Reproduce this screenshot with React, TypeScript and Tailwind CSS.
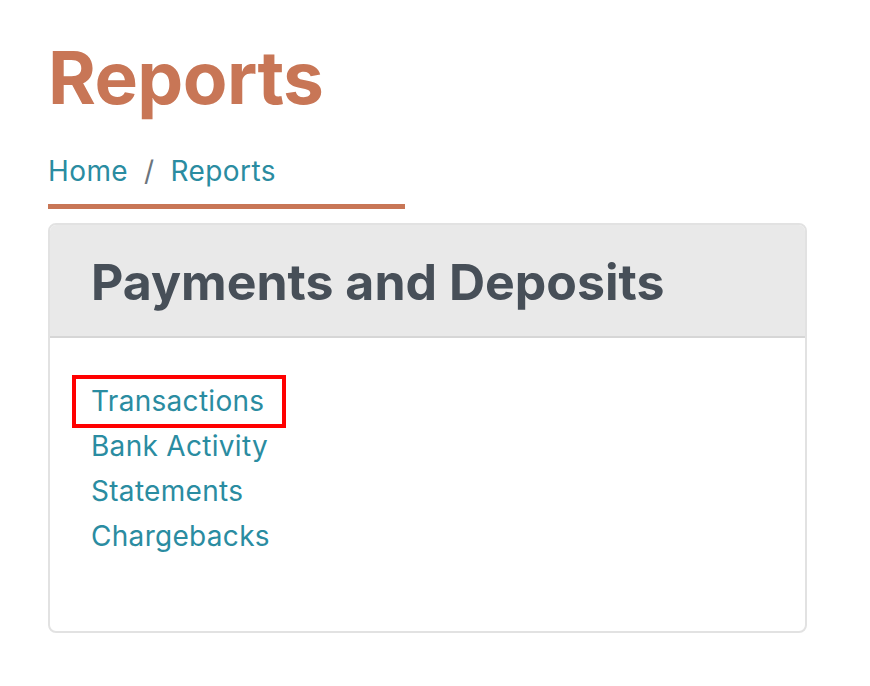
export default function App() {
  const links = ['Transactions', 'Bank Activity', 'Statements', 'Chargebacks']

  return (
    <div className="min-h-[686px] w-[870px] bg-white font-['Inter','Liberation_Sans',sans-serif]">
      <div className="px-12 pt-[30px]">
        <h1 className="text-[73px] font-bold leading-[96px] tracking-[-0.6px] text-[#c87656]">Reports</h1>

        <div className="mt-[28px] w-[357px] border-b-[5px] border-[#c87656] pb-[16px]">
          <nav className="flex items-center text-[28px] leading-[34px] tracking-[0.4px] text-[#2a8ca1]">
            <a href="#">Home</a>
            <span className="px-[16px] text-[#6c757d]">/</span>
            <a href="#">Reports</a>
          </nav>
        </div>

        <div className="mt-[14px] w-[759px] overflow-hidden rounded-lg border-2 border-[#e2e2e2]">
          <div className="flex h-[113px] items-center border-b-2 border-[#d6d6d6] bg-[#e9e9e9] px-[41px] pt-[4px]">
            <h2 className="text-[50px] font-bold text-[#474f58]">Payments and Deposits</h2>
          </div>
          <ul className="h-[293px] px-[41px] pt-[41px]">
            {links.map((l, i) => (
              <li key={l} className="text-[28px] leading-[45px] tracking-[0.3px]">
                <a
                  href="#"
                  className={
                    i === 0
                      ? '-my-[4px] -ml-[19px] inline-block border-4 border-[#ff0000] pl-[15px] pr-[18px] text-[#2a8ca1]'
                      : 'text-[#2a8ca1]'
                  }
                >
                  {l}
                </a>
              </li>
            ))}
          </ul>
        </div>
      </div>
    </div>
  )
}
